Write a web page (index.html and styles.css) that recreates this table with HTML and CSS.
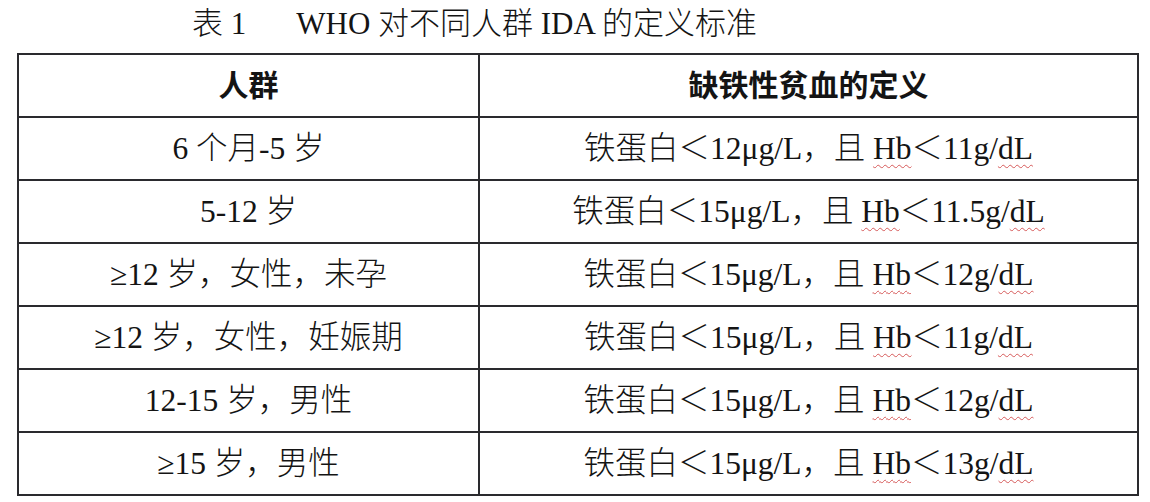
FILE: index.html
```html
<!DOCTYPE html>
<html lang="zh-CN">
<head>
<meta charset="utf-8">
<link rel="stylesheet" href="styles.css">
</head>
<body>
<div class="page">
  <div class="title"><span class="label">表 1</span><span class="name">WHO 对不同人群 IDA 的定义标准</span></div>
  <table class="grid">
    <colgroup><col class="c1"><col class="c2"></colgroup>
    <thead>
      <tr><th>人群</th><th>缺铁性贫血的定义</th></tr>
    </thead>
    <tbody>
      <tr><td>6 个月-5 岁</td><td>铁蛋白＜12μg/L，且 <span class="sq">Hb</span>＜11g/<span class="sq">dL</span></td></tr>
      <tr><td>5-12 岁</td><td>铁蛋白＜15μg/L，且 <span class="sq">Hb</span>＜11.5g/<span class="sq">dL</span></td></tr>
      <tr><td>≥12 岁，女性，未孕</td><td>铁蛋白＜15μg/L，且 <span class="sq">Hb</span>＜12g/<span class="sq">dL</span></td></tr>
      <tr><td>≥12 岁，女性，妊娠期</td><td>铁蛋白＜15μg/L，且 <span class="sq">Hb</span>＜11g/<span class="sq">dL</span></td></tr>
      <tr><td>12-15 岁，男性</td><td>铁蛋白＜15μg/L，且 <span class="sq">Hb</span>＜12g/<span class="sq">dL</span></td></tr>
      <tr><td>≥15 岁，男性</td><td>铁蛋白＜15μg/L，且 <span class="sq">Hb</span>＜13g/<span class="sq">dL</span></td></tr>
    </tbody>
  </table>
</div>
</body>
</html>
```

FILE: styles.css
```css
html, body {
  margin: 0;
  padding: 0;
  background: #ffffff;
}
.page {
  width: 1150px;
  height: 502px;
  overflow: hidden;
  font-family: "Liberation Serif", "Noto Sans CJK SC", serif;
  color: #141414;
}
.title {
  padding: 5px 0 0 192px;
  height: 53px;
  box-sizing: border-box;
  font-size: 31px;
  line-height: 38px;
  font-weight: 300;
  display: flex;
  gap: 50px;
}
.grid {
  margin-left: 17px;
  width: 1122px;
  border-collapse: collapse;
  border: 2px solid #1e1e22;
  table-layout: fixed;
}
.c1 { width: 461px; }
.grid th, .grid td {
  height: 61px;
  padding: 0;
  text-align: center;
  vertical-align: middle;
  border: 2px solid #2a2a2e;
  font-size: 31.5px;
  line-height: 38px;
  font-weight: 300;
}
.grid th {
  font-weight: 700;
  font-size: 30px;
}
.sq {
  text-decoration: underline wavy #d65a5a;
  text-decoration-thickness: 1px;
  text-underline-offset: 5px;
  text-decoration-skip-ink: none;
}
```
